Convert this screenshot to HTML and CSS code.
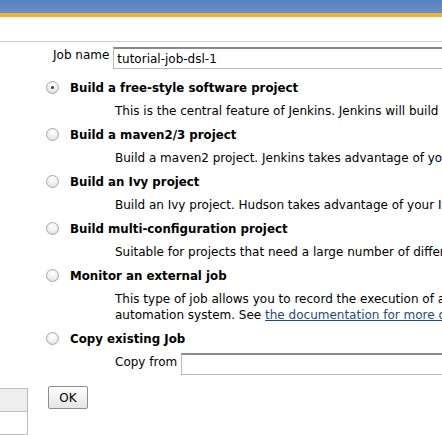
FILE: index.html
```html
<!DOCTYPE html>
<html>
<head>
<meta charset="utf-8">
<link rel="stylesheet" href="styles.css">
</head>
<body>
<div class="topbar"></div>
<div class="rule"></div>
<div class="form">
  <div class="name-row">
    <label class="name-label">Job name</label>
    <input class="text-input" type="text" value="tutorial-job-dsl-1">
  </div>
  <div class="option">
    <div class="opt-head"><span class="radio checked"></span><span class="opt-title">Build a free-style software project</span></div>
    <div class="opt-desc">This is the central feature of Jenkins. Jenkins will build your project, combining any SCM with any build system.</div>
  </div>
  <div class="option">
    <div class="opt-head"><span class="radio"></span><span class="opt-title">Build a maven2/3 project</span></div>
    <div class="opt-desc">Build a maven2 project. Jenkins takes advantage of your POM files and drastically reduces configuration.</div>
  </div>
  <div class="option">
    <div class="opt-head"><span class="radio"></span><span class="opt-title">Build an Ivy project</span></div>
    <div class="opt-desc">Build an Ivy project. Hudson takes advantage of your Ivy module descriptor files.</div>
  </div>
  <div class="option">
    <div class="opt-head"><span class="radio"></span><span class="opt-title">Build multi-configuration project</span></div>
    <div class="opt-desc">Suitable for projects that need a large number of different configurations.</div>
  </div>
  <div class="option">
    <div class="opt-head"><span class="radio"></span><span class="opt-title">Monitor an external job</span></div>
    <div class="opt-desc">This type of job allows you to record the execution of a process run outside Jenkins,<br>automation system. See <a href="#">the documentation for more details</a>.</div>
  </div>
  <div class="option">
    <div class="opt-head"><span class="radio"></span><span class="opt-title">Copy existing Job</span></div>
    <div class="copy-row"><label class="copy-label">Copy from</label><input class="text-input copy-input" type="text"></div>
  </div>
</div>
<div class="bottom">
  <div class="side-box"><div class="side-row shaded"></div><div class="side-row"></div></div>
  <button class="ok-btn">OK</button>
</div>
</body>
</html>
```
FILE: styles.css
```css
html, body {
  margin: 0;
  padding: 0;
  background: #fff;
  overflow: hidden;
}
body {
  font-family: "DejaVu Sans", Verdana, sans-serif;
  font-size: 12px;
  color: #000;
  width: 442px;
  height: 435px;
}
.topbar {
  height: 13px;
  background: linear-gradient(#5680bf, #6c8fc6);
  border-bottom: 4px solid #f7b12f;
}
.rule {
  margin-top: 24px;
  height: 1px;
  background: #cfcfcf;
}
.form {
  padding-left: 46px;
  overflow: hidden;
}
.name-row {
  display: flex;
  align-items: center;
  margin-top: 5px;
  white-space: nowrap;
}
.name-label {
  width: 68px;
  margin-left: 7px;
  text-align: right;
  padding-right: 4px;
  box-sizing: border-box;
  position: relative;
  top: -3px;
}
.text-input {
  font-family: "DejaVu Sans", Verdana, sans-serif;
  font-size: 12px;
  height: 22px;
  box-sizing: border-box;
  width: 400px;
  border: 1px solid #bbb;
  border-top: 2px solid #8a8a8a;
  padding: 1px 3px 0;
  margin: 0;
  flex: none;
  color: #000;
}
.option {
  margin-top: 8px;
}
.name-row + .option {
  margin-top: 11px;
}
.opt-head {
  display: flex;
  align-items: center;
  height: 15px;
}
.radio {
  width: 11px;
  height: 11px;
  border-radius: 50%;
  border: 1px solid #a9a9a9;
  background: radial-gradient(circle at 50% 30%, #ffffff 0%, #f0f0f0 50%, #d6d6d6 100%);
  box-sizing: content-box;
  margin-right: 11px;
  display: flex;
  align-items: center;
  justify-content: center;
  flex: none;
}
.radio.checked::after {
  content: "";
  width: 3px;
  height: 3px;
  border-radius: 50%;
  background: #333;
}
.opt-title {
  font-weight: bold;
  font-size: 11.8px;
  white-space: nowrap;
}
.opt-desc {
  margin-top: 8px;
  padding-left: 69px;
  white-space: nowrap;
  line-height: 16px;
}
.opt-desc a {
  color: #204a87;
}
.copy-row {
  display: flex;
  align-items: center;
  margin-top: 7px;
  padding-left: 69px;
  white-space: nowrap;
}
.copy-label {
  margin-right: 4px;
  position: relative;
  top: -2px;
}
.copy-input {
  width: 300px;
}
.bottom {
  display: flex;
  align-items: flex-start;
  margin-top: 11px;
}
.side-box {
  width: 27px;
  margin-left: -1px;
  margin-top: 2px;
  border: 1px solid #bdbdbd;
  flex: none;
}
.side-row {
  height: 22px;
}
.side-row.shaded {
  background: #eeeeee;
  border-bottom: 1px solid #bdbdbd;
}
.ok-btn {
  margin-left: 20px;
  width: 40px;
  height: 23px;
  font-family: "DejaVu Sans", Verdana, sans-serif;
  font-size: 12px;
  border: 1px solid #8f8f8f;
  border-radius: 2px;
  background: linear-gradient(#ffffff, #e4e4e4);
  padding: 0;
  color: #000;
}
```
